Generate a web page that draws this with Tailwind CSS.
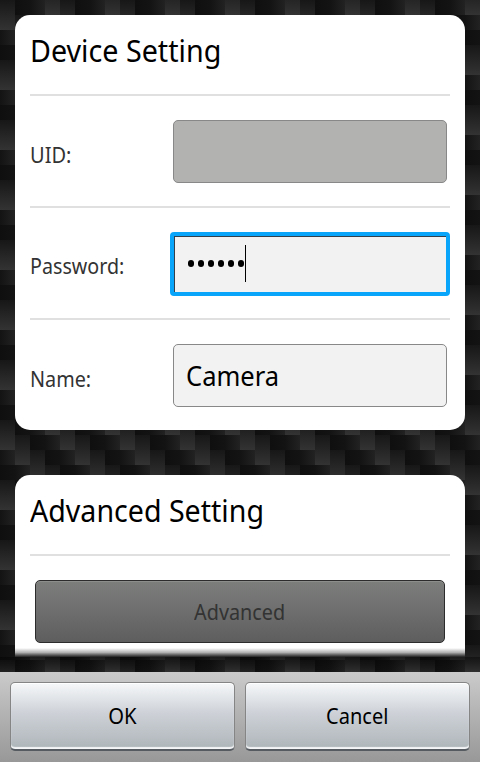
<!DOCTYPE html>
<html lang="en">
<head>
<meta charset="utf-8">
<title>Device Setting</title>
<script src="https://cdn.jsdelivr.net/npm/@tailwindcss/browser@4"></script>
</head>
<body class="relative h-[762px] w-[480px] overflow-hidden bg-[#151515] font-['Noto_Sans','Open_Sans',sans-serif] text-black">
<svg class="absolute inset-0 -z-10 h-full w-full" aria-hidden="true">
  <defs>
    <linearGradient id="v" x1="0" y1="0" x2="0" y2="1"><stop offset="0" stop-color="#171717"/><stop offset="1" stop-color="#333"/></linearGradient>
    <linearGradient id="h" x1="0" y1="0" x2="1" y2="0"><stop offset="0" stop-color="#0f0f0f"/><stop offset=".5" stop-color="#131313"/><stop offset="1" stop-color="#222"/></linearGradient>
    <pattern id="weave" width="60" height="60" patternUnits="userSpaceOnUse">
      <g fill="url(#v)"><rect width="15" height="30"/><rect x="15" y="15" width="15" height="30"/><rect x="30" y="30" width="15" height="30"/><rect x="45" y="45" width="15" height="30"/><rect x="45" y="-15" width="15" height="30"/></g>
      <g fill="url(#h)"><rect x="15" width="30" height="15"/><rect x="30" y="15" width="30" height="15"/><rect x="45" y="30" width="30" height="15"/><rect x="-15" y="30" width="30" height="15"/><rect y="45" width="30" height="15"/></g>
    </pattern>
  </defs>
  <rect width="480" height="762" fill="url(#weave)"/>
</svg>
<div class="flex h-full flex-col">
  <main class="relative h-[672px] overflow-hidden px-[15px] pt-[15px]">
    <section class="h-[415px] rounded-[15px] bg-white px-[15px]">
      <h1 class="flex h-[79px] items-center pb-[8px] text-[31px]"><span class="origin-left scale-x-[.925] whitespace-nowrap">Device Setting</span></h1>
      <div class="flex h-[112px] items-start border-t-2 border-[#e0e0e0] pr-[3px]">
        <label class="w-[143px] pt-[43px] text-[22px] leading-[30px] text-[#333]"><span class="inline-block origin-left scale-x-[.91]">UID:</span></label>
        <div class="mt-[24px] h-[63px] flex-1 rounded-[5px] border border-[#888] bg-[#b2b2b0]"></div>
      </div>
      <div class="flex h-[112px] items-start border-t-2 border-[#e0e0e0]">
        <label class="w-[140px] pt-[42px] text-[22px] leading-[30px] text-[#333]"><span class="inline-block origin-left scale-x-[.895]">Password:</span></label>
        <div class="mt-[24px] h-[64px] flex-1 rounded-[4px] border-4 border-[#09a5fb] bg-[#f2f2f2]">
          <div class="flex h-[56px] items-center border-t border-l border-[#34404c] pb-[2px] pl-[13px]">
            <div class="flex gap-[4px]"><i class="h-[7px] w-[6px] rounded-full bg-black"></i><i class="h-[7px] w-[6px] rounded-full bg-black"></i><i class="h-[7px] w-[6px] rounded-full bg-black"></i><i class="h-[7px] w-[6px] rounded-full bg-black"></i><i class="h-[7px] w-[6px] rounded-full bg-black"></i><i class="h-[7px] w-[6px] rounded-full bg-black"></i></div>
            <i class="ml-px h-[37px] w-px bg-black"></i>
          </div>
        </div>
      </div>
      <div class="flex h-[112px] items-start border-t-2 border-[#e0e0e0] pr-[3px]">
        <label class="w-[143px] pt-[43px] text-[22px] leading-[30px] text-[#333]"><span class="inline-block origin-left scale-x-[.9]">Name:</span></label>
        <div class="mt-[24px] flex h-[63px] flex-1 items-center rounded-[5px] border border-[#888] bg-[#f2f2f2] pt-[2px] pl-[12px] text-[27px]"><span class="origin-left scale-x-[.945]">Camera</span></div>
      </div>
    </section>
    <section class="mt-[45px] h-[182px] rounded-t-[15px] bg-white px-[15px]">
      <h2 class="flex h-[79px] items-center pb-[8px] text-[31px]"><span class="origin-left scale-x-[.922] whitespace-nowrap">Advanced Setting</span></h2>
      <div class="border-t-2 border-[#e0e0e0] px-[5px] pt-[24px]">
        <button class="flex h-[63px] w-full items-center justify-center rounded-[5px] border border-[#2c2c2c] bg-linear-to-b from-[#7c7e7c] to-[#5e5e5e] text-[22px] text-[#333] shadow-[inset_0_1px_0_#8c8e8c]"><span class="scale-x-[.9]">Advanced</span></button>
      </div>
    </section>
    <div class="absolute inset-x-0 bottom-0 h-[15px] bg-linear-to-b from-black/40 to-transparent"></div>
    <div class="absolute inset-x-[15px] bottom-[15px] h-[9px] bg-linear-to-b from-transparent via-[#b0b0b0] to-[#222]"></div>
  </main>
  <footer class="flex h-[90px] gap-[10px] bg-linear-to-b from-[#cbcbcb] to-[#989898] px-[10px] pt-[10px]">
    <button class="flex h-[69px] flex-1 items-center justify-center rounded-[5px] border border-b-2 border-[#858585] border-b-[#555b60] bg-linear-to-b from-[#f6f8f9] via-[#ced2d8] via-45% to-[#aeb5b9] pb-px text-[22px] shadow-[inset_0_1px_0_white,inset_0_-2px_1px_#f4f6f7]"><span class="scale-x-[.92]">OK</span></button>
    <button class="flex h-[69px] flex-1 items-center justify-center rounded-[5px] border border-b-2 border-[#858585] border-b-[#555b60] bg-linear-to-b from-[#f6f8f9] via-[#ced2d8] via-45% to-[#aeb5b9] pb-px text-[22px] shadow-[inset_0_1px_0_white,inset_0_-2px_1px_#f4f6f7]"><span class="scale-x-[.91]">Cancel</span></button>
  </footer>
</div>
</body>
</html>
